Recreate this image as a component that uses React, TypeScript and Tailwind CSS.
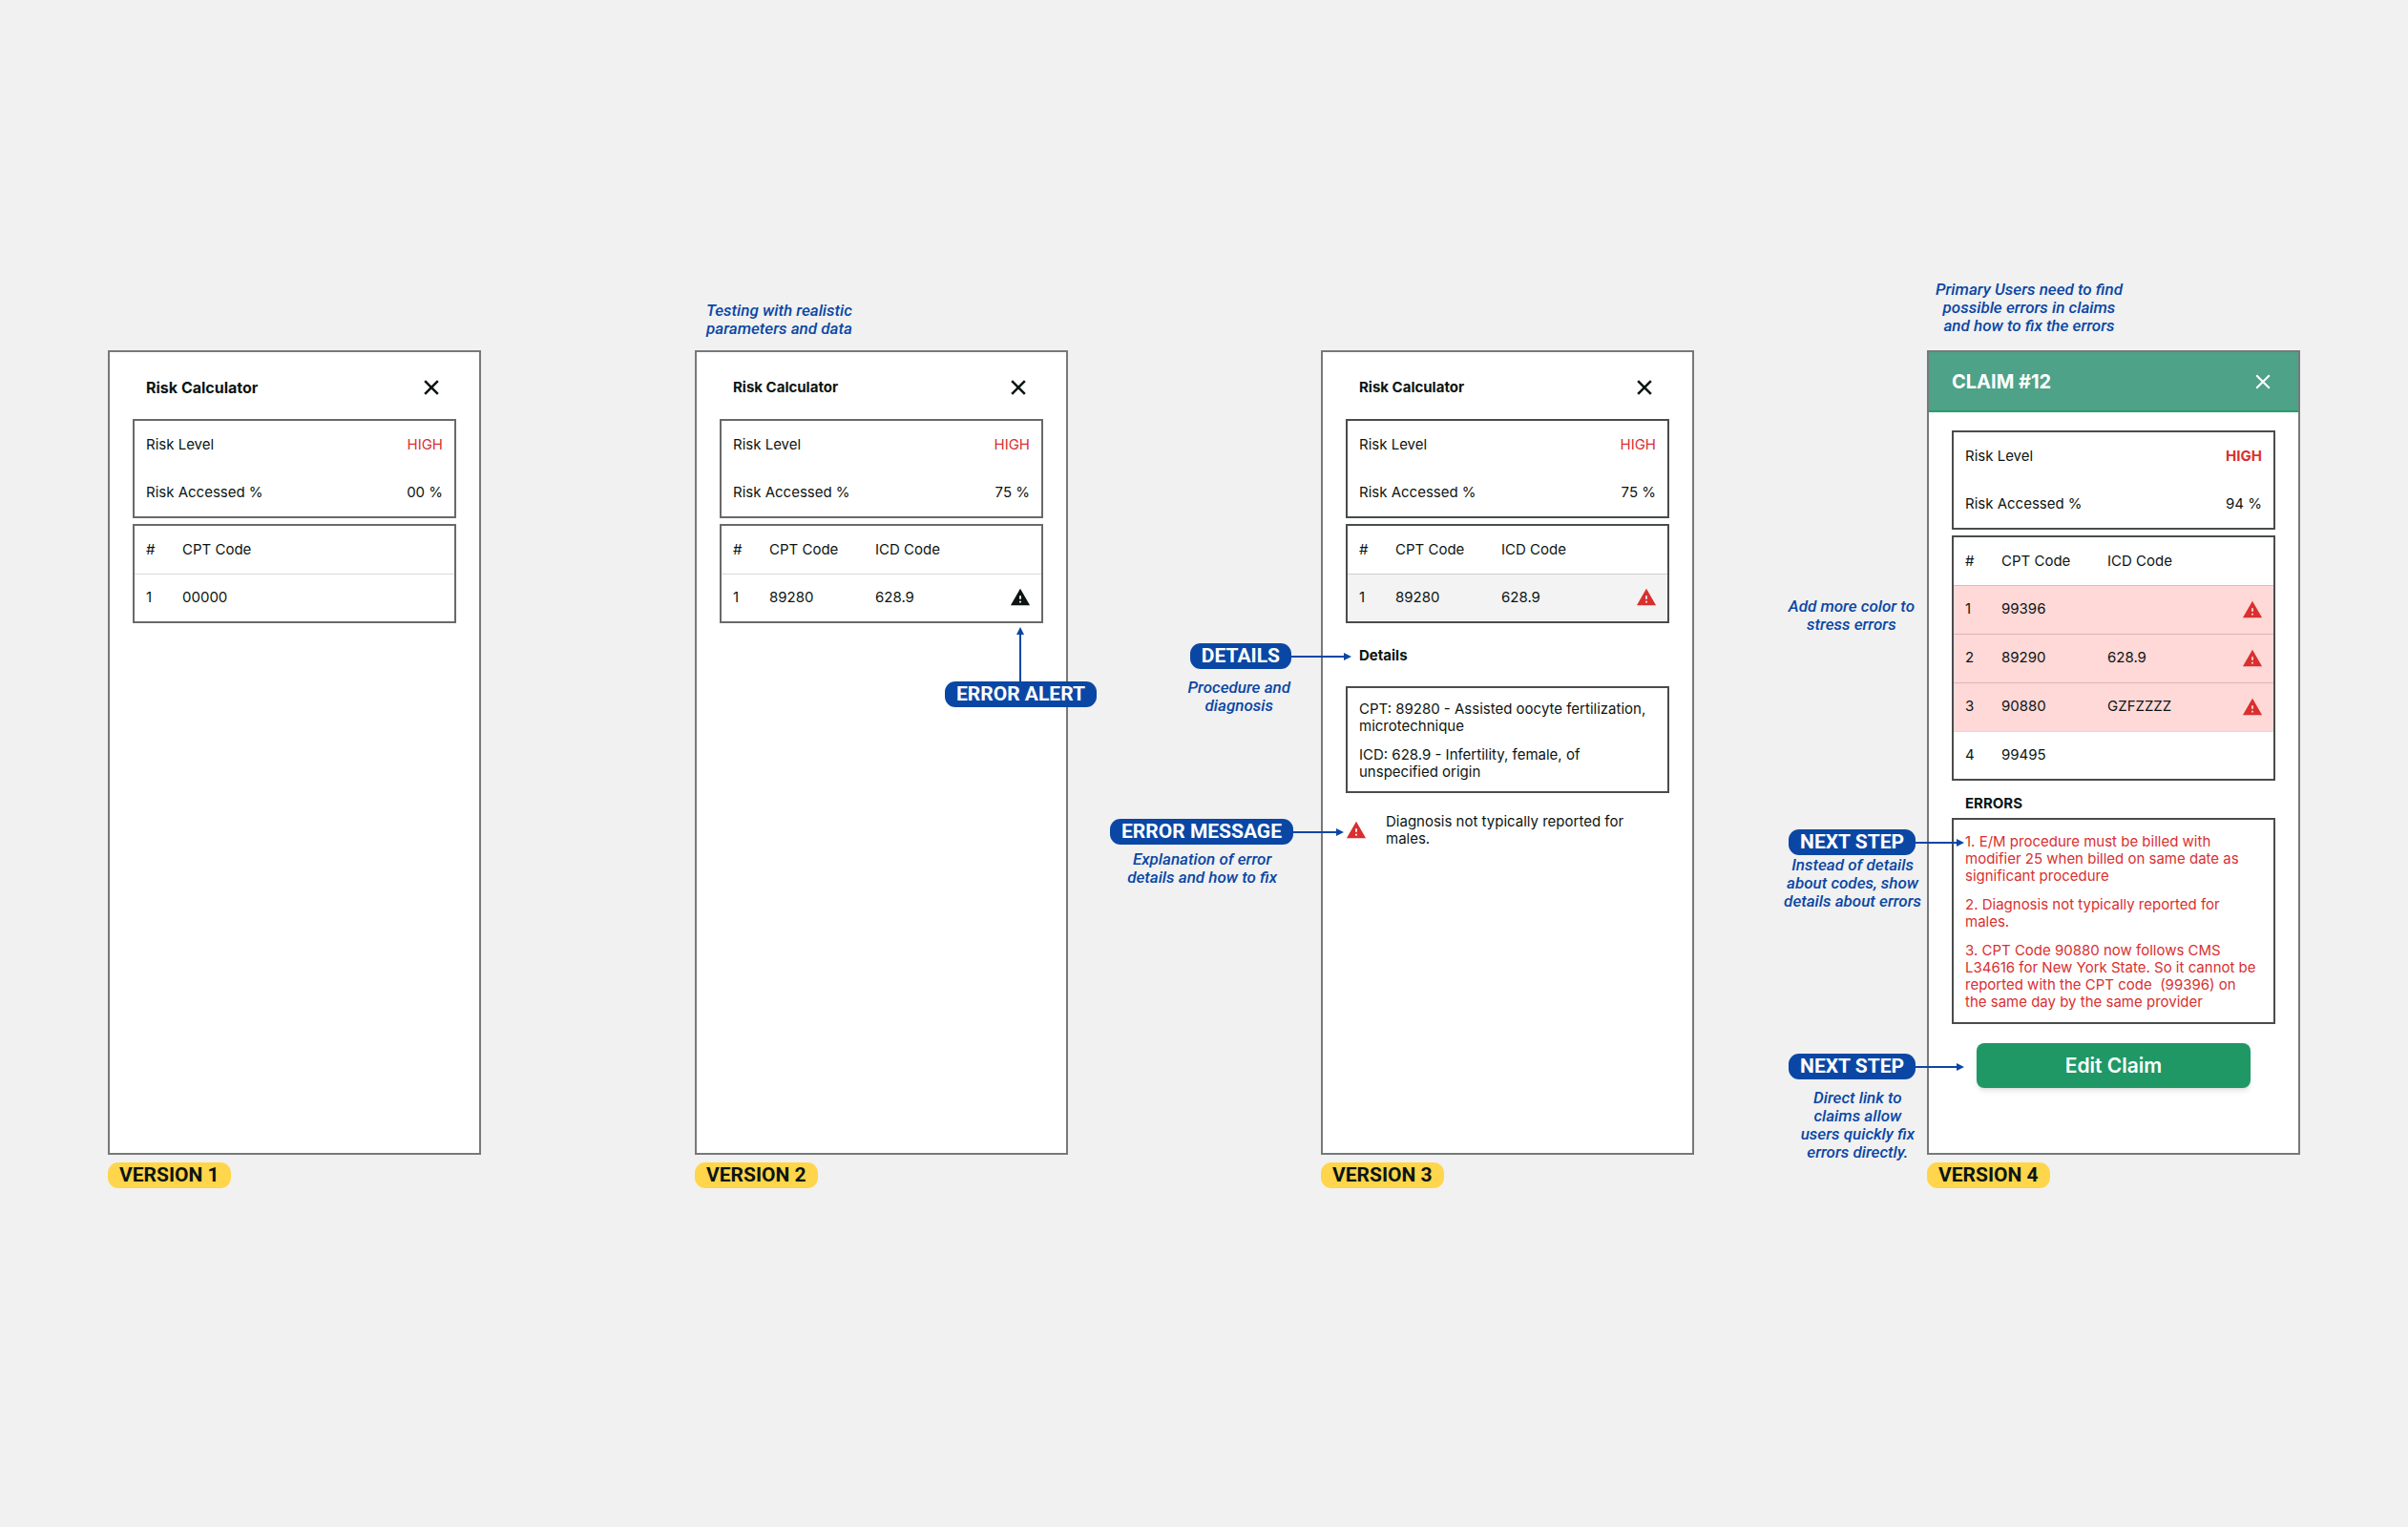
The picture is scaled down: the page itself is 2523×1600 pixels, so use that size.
import type { ReactNode } from "react";
import { MdWarning } from "react-icons/md";

type Row = { cpt: string; icd?: string; alert?: "dark" | "red"; tint?: string };

function CloseIcon({ weight }: { weight: number }) {
  return (
    <svg viewBox="0 0 24 24" className="size-[26px]" fill="none" stroke="currentColor" strokeWidth={weight} aria-hidden="true">
      <path d="M5.7 5.7L18.3 18.3M18.3 5.7L5.7 18.3" />
    </svg>
  );
}

function Frame({ children, version, header }: { children: ReactNode; version: number; header: ReactNode }) {
  return (
    <>
      <section className="min-h-[843px] border-2 border-[#777979] bg-white">
        {header}
        <div className="px-6">{children}</div>
      </section>
      <h2 className="mt-2 w-fit rounded-[11px] bg-[#ffd54c] px-3 font-['Roboto',sans-serif] text-[21px] leading-[27px] font-bold text-[#0c1512]">
        VERSION {version}
      </h2>
    </>
  );
}

function PlainHeader({ large }: { large?: boolean }) {
  return (
    <header className="flex items-center justify-between pt-6 pr-[37px] pb-5 pl-[38px]">
      <h3 className={`leading-[26px] font-bold ${large ? "text-base" : "text-[15px]"}`}>Risk Calculator</h3>
      <button type="button" aria-label="Close">
        <CloseIcon weight={2.4} />
      </button>
    </header>
  );
}

function Summary({ level, percent, border, bold }: { level: string; percent: string; border: string; bold?: boolean }) {
  return (
    <dl className={`border-2 px-3 text-[15px] ${border}`}>
      <div className="flex h-[50px] items-center justify-between">
        <dt>Risk Level</dt>
        <dd className={bold ? "font-bold text-[#d93030]" : "text-[#d93030]"}>{level}</dd>
      </div>
      <div className="flex h-[50px] items-center justify-between">
        <dt>Risk Accessed %</dt>
        <dd>{percent}</dd>
      </div>
    </dl>
  );
}

function Codes({ rows, border, icd = true }: { rows: Row[]; border: string; icd?: boolean }) {
  return (
    <div className={`mt-[6px] border-2 ${border}`}>
      <table className="w-full table-fixed border-collapse text-left text-[15px]">
        <thead>
          <tr className="h-[50px]">
            <th className="w-[50px] pl-3 font-normal">#</th>
            <th className="w-[111px] font-normal">CPT Code</th>
            <th className="font-normal">{icd ? "ICD Code" : ""}</th>
            <th className="w-12" aria-label="Alert" />
          </tr>
        </thead>
        <tbody>
          {rows.map((row, i) => (
            <tr key={row.cpt} className={`h-[51px] border-t border-black/15 last:h-[50px] ${row.tint ?? ""}`}>
              <td className="pl-3">{i + 1}</td>
              <td>{row.cpt}</td>
              <td>{row.icd}</td>
              <td className="pr-[11px]">
                {row.alert && (
                  <MdWarning
                    aria-label="Error"
                    className={`ml-auto size-[22px] ${row.alert === "red" ? "text-[#d9302f]" : "text-[#0c1512]"}`}
                  />
                )}
              </td>
            </tr>
          ))}
        </tbody>
      </table>
    </div>
  );
}

function Note({ children, className }: { children: ReactNode; className: string }) {
  return (
    <p
      className={`absolute text-center font-['Roboto',sans-serif] text-[17px] leading-[19px] font-medium whitespace-nowrap text-[#0a47a5] italic ${className}`}
    >
      {children}
    </p>
  );
}

function Pill({ children }: { children: ReactNode }) {
  return (
    <span className="rounded-[11px] bg-[#0a47a5] px-3 font-['Roboto',sans-serif] text-[21px] leading-[27px] font-bold whitespace-nowrap text-white">
      {children}
    </span>
  );
}

function Callout({ label, arrow, className }: { label: string; arrow: string; className: string }) {
  return (
    <div className={`absolute flex items-center ${className}`}>
      <Pill>{label}</Pill>
      <span className={`h-[2px] bg-[#0a47a5] ${arrow}`} />
      <svg viewBox="0 0 8 8" className="size-2 fill-[#0a47a5]" aria-hidden="true">
        <path d="M0 0L8 4L0 8Z" />
      </svg>
    </div>
  );
}

export default function App() {
  return (
    <main className="min-h-screen bg-[#f1f1f1] px-[113px] pt-[367px] font-['Inter',sans-serif] text-[#0c1512]">
      <div className="grid grid-cols-[391fr_224fr_391fr_265fr_391fr_244fr_391fr] items-start">
        <article className="col-start-1">
          <Frame version={1} header={<PlainHeader large />}>
            <Summary level="HIGH" percent="00 %" border="border-[#686a6a]" />
            <Codes rows={[{ cpt: "00000" }]} border="border-[#686a6a]" icd={false} />
          </Frame>
        </article>

        <article className="relative col-start-3">
          <Note className="bottom-full left-3 mb-[13px]">
            Testing with realistic
            <br />
            parameters and data
          </Note>
          <Frame version={2} header={<PlainHeader />}>
            <Summary level="HIGH" percent="75 %" border="border-[#686a6a]" />
            <Codes rows={[{ cpt: "89280", icd: "628.9", alert: "dark" }]} border="border-[#686a6a]" />
          </Frame>
          <div className="absolute top-[290px] -right-[30px] flex flex-col items-center">
            <svg viewBox="0 0 8 8" className="size-2 fill-[#0a47a5]" aria-hidden="true">
              <path d="M0 8L4 0L8 8Z" />
            </svg>
            <span className="h-[49px] w-[2px] bg-[#0a47a5]" />
            <Pill>ERROR ALERT</Pill>
          </div>
        </article>

        <article className="relative col-start-5">
          <Frame version={3} header={<PlainHeader />}>
            <Summary level="HIGH" percent="75 %" border="border-[#4a4c4c]" />
            <Codes
              rows={[{ cpt: "89280", icd: "628.9", alert: "red", tint: "bg-[#f3f3f3]" }]}
              border="border-[#4a4c4c]"
            />
            <h4 className="mt-6 px-[14px] text-[15px] leading-5 font-bold">Details</h4>
            <div className="mt-[22px] space-y-3 border-2 border-[#4a4c4c] px-3 pt-[13px] pb-[11px] text-[15px] leading-[18px] whitespace-nowrap">
              <p>
                CPT: 89280 - Assisted oocyte fertilization,
                <br />
                microtechnique
              </p>
              <p>
                ICD: 628.9 - Infertility, female, of
                <br />
                unspecified origin
              </p>
            </div>
            <div className="mt-[21px] flex items-center gap-5">
              <MdWarning aria-label="Error" className="size-[22px] text-[#d9302f]" />
              <p className="text-[15px] leading-[18px]">
                Diagnosis not typically reported for
                <br />
                males.
              </p>
            </div>
          </Frame>
          <Callout label="DETAILS" arrow="w-[55px]" className="top-[307px] right-[359px]" />
          <Note className="top-[344px] right-[423px]">
            Procedure and
            <br />
            diagnosis
          </Note>
          <Callout label="ERROR MESSAGE" arrow="w-[45px]" className="top-[491px] right-[367px]" />
          <Note className="top-[524px] right-[437px]">
            Explanation of error
            <br />
            details and how to fix
          </Note>
        </article>

        <article className="relative col-start-7">
          <Note className="bottom-full left-[9px] mb-4">
            Primary Users need to find
            <br />
            possible errors in claims
            <br />
            and how to fix the errors
          </Note>
          <Frame
            version={4}
            header={
              <header className="flex h-[63px] items-center justify-between border-b-2 border-[#2a9d6d] bg-[#4da287] px-6 text-white">
                <h3 className="text-[20px] font-bold">CLAIM #12</h3>
                <button type="button" aria-label="Close">
                  <CloseIcon weight={2} />
                </button>
              </header>
            }
          >
            <div className="pt-[19px]">
              <Summary level="HIGH" percent="94 %" border="border-[#4a4c4c]" bold />
              <Codes
                rows={[
                  { cpt: "99396", alert: "red", tint: "bg-[#ffd8d8]" },
                  { cpt: "89290", icd: "628.9", alert: "red", tint: "bg-[#ffd8d8]" },
                  { cpt: "90880", icd: "GZFZZZZ", alert: "red", tint: "bg-[#ffd8d8]" },
                  { cpt: "99495" },
                ]}
                border="border-[#4a4c4c]"
              />
              <h4 className="mt-[14px] px-[14px] text-[15px] leading-5 font-bold">ERRORS</h4>
              <div className="mt-[5px] space-y-3 border-2 border-[#4a4c4c] px-3 pt-[14px] pb-3 text-[15px] leading-[18px] whitespace-nowrap text-[#d93030]">
                <p>
                  1. E/M procedure must be billed with
                  <br />
                  modifier 25 when billed on same date as
                  <br />
                  significant procedure
                </p>
                <p>
                  2. Diagnosis not typically reported for
                  <br />
                  males.
                </p>
                <p>
                  3. CPT Code 90880 now follows CMS
                  <br />
                  L34616 for New York State. So it cannot be
                  <br />
                  reported with the CPT code&nbsp; (99396) on
                  <br />
                  the same day by the same provider
                </p>
              </div>
              <div className="px-[26px] pt-5">
                <button
                  type="button"
                  className="h-[47px] w-full rounded-lg bg-[#1f9866] text-[21px] font-semibold text-white shadow-md"
                >
                  Edit Claim
                </button>
              </div>
            </div>
          </Frame>
          <Note className="top-[259px] right-[404px]">
            Add more color to
            <br />
            stress errors
          </Note>
          <Callout label="NEXT STEP" arrow="w-[43px]" className="top-[502px] right-[352px]" />
          <Note className="top-[530px] right-[397px]">
            Instead of details
            <br />
            about codes, show
            <br />
            details about errors
          </Note>
          <Callout label="NEXT STEP" arrow="w-[43px]" className="top-[737px] right-[352px]" />
          <Note className="top-[774px] right-[404px]">
            Direct link to
            <br />
            claims allow
            <br />
            users quickly fix
            <br />
            errors directly.
          </Note>
        </article>
      </div>
    </main>
  );
}
